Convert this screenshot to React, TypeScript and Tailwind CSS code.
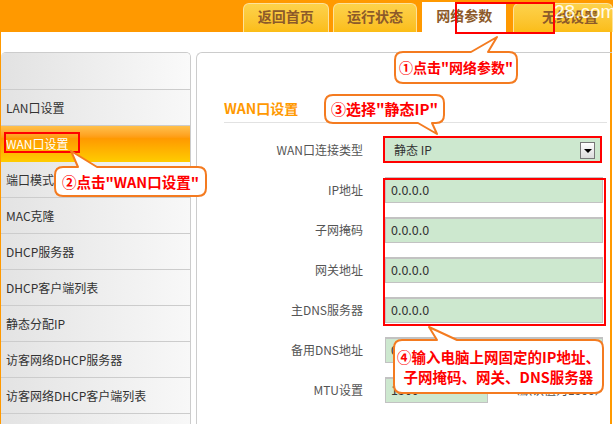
import React from 'react';

const menu = [
  'LAN口设置',
  'WAN口设置',
  '端口模式',
  'MAC克隆',
  'DHCP服务器',
  'DHCP客户端列表',
  '静态分配IP',
  '访客网络DHCP服务器',
  '访客网络DHCP客户端列表',
  '',
];

const fields = [
  { label: 'IP地址', value: '0.0.0.0' },
  { label: '子网掩码', value: '0.0.0.0' },
  { label: '网关地址', value: '0.0.0.0' },
  { label: '主DNS服务器', value: '0.0.0.0' },
  { label: '备用DNS地址', value: '0.0.0.0' },
];

// rounded box with a pointer, drawn as one outline
const bubble = (
  x: number, y: number, w: number, h: number,
  side: 'top' | 'bottom', b1: number, b2: number, ax: number, ay: number
) => {
  const r = 8;
  const R = x + w;
  const B = y + h;
  const top = side === 'top' ? `L${b1},${y} L${ax},${ay} L${b2},${y} ` : '';
  const bottom = side === 'bottom' ? `L${b2},${B} L${ax},${ay} L${b1},${B} ` : '';
  return `M${x + r},${y} ${top}L${R - r},${y} Q${R},${y} ${R},${y + r} L${R},${B - r} Q${R},${B} ${R - r},${B} ${bottom}L${x + r},${B} Q${x},${B} ${x},${B - r} L${x},${y + r} Q${x},${y} ${x + r},${y} Z`;
};

const Tab = ({ text, className }: { text: string; className: string }) => (
  <div className={`h-[29px] rounded-t-[6px] border border-b-0 border-[#fde29a] bg-linear-to-b from-[#fdd24a] to-[#fbbd16] text-[14px] font-bold text-[#8c5a2a] leading-[25px] ${className}`}>
    {text}
  </div>
);

const App = () => {
  return (
    <div className="relative w-[613px] h-[424px] overflow-hidden bg-white font-['Noto_Sans_CJK_SC',sans-serif]">
      {/* top nav */}
      <div className="h-8 bg-[#ff9900] flex items-end pl-[243px]">
        <Tab text="返回首页" className="w-[102px] text-center" />
        <Tab text="运行状态" className="w-[101px] ml-[4px] text-center" />
        <div className="w-[100px] h-[30px] ml-[5px] bg-white text-center text-[14px] font-bold text-[#8c5a2a] leading-[27px]">网络参数</div>
        <Tab text="无线设置" className="w-[100px] ml-[7px] pl-[28px] shrink-0" />
      </div>

      {/* body */}
      <div className="flex w-[612px] h-[392px] border-l border-r-2 border-[#ff9900] pt-5">
        {/* sidebar */}
        <div className="w-[190px] shrink-0 border-t border-r border-[#cccccc] rounded-t-[5px] overflow-hidden">
          <div className="h-[37px] border-b border-[#cccccc] bg-linear-to-r from-[#e2e2e2] to-[#fafafa]" />
          {menu.map((m) =>
            m === 'WAN口设置' ? (
              <div key={m} className="h-9 pl-[5px] flex items-center text-[12px] text-white bg-linear-to-b from-[#ffc04a] from-0% via-[#ff9900] via-35% to-[#ffcc00]">
                {m}
              </div>
            ) : (
              <div key={m || 'blank'} className="h-9 pl-[5px] flex items-center border-b border-[#cccccc] text-[12px] text-[#333] bg-linear-to-r from-[#e3e3e3] to-[#f8f8f8]">
                {m}
              </div>
            )
          )}
        </div>

        {/* main panel */}
        <div className="flex-1 ml-[5px] border-l border-t border-[#cccccc] rounded-tl-[6px] pl-[27px] pr-[5px]">
          <div className="pt-[45px] pb-[4px] border-b border-[#e2e2e2] text-[14px] font-bold text-[#ff9900] leading-[20px]">
            WAN口设置
          </div>
          <div className="pt-[7px]">
            <div className="h-10 flex items-center">
              <div className="w-[139px] text-right text-[12px] text-[#555]">WAN口连接类型</div>
              <div className="relative ml-[22px] w-[215px] h-[26px] bg-[#cde8cf] flex items-center pl-[9px] text-[12px] text-[#333]">
                静态 IP
                <div className="absolute right-[5px] top-[5px] w-[15px] h-[17px] border border-[#777] bg-linear-to-b from-white to-[#dcdcdc] flex items-center justify-center">
                  <div className="w-0 h-0 border-l-[4px] border-r-[4px] border-t-[4px] border-l-transparent border-r-transparent border-t-black" />
                </div>
              </div>
            </div>
            {fields.map((f) => (
              <div key={f.label} className="h-10 flex items-center">
                <div className="w-[139px] text-right text-[12px] text-[#555]">{f.label}</div>
                <div className="ml-[22px] w-[218px] h-[26px] bg-[#cde8cf] border border-[#c2c2c2] border-t-2 flex items-center pl-[5px] text-[12.5px] text-[#333]">
                  {f.value}
                </div>
              </div>
            ))}
            <div className="h-10 flex items-center">
              <div className="w-[139px] text-right text-[12px] text-[#555]">MTU设置</div>
              <div className="ml-[22px] w-[103px] h-[26px] bg-[#cde8cf] border border-[#c2c2c2] border-t-2 flex items-center pl-[5px] text-[12.5px] text-[#333]">
                1500
              </div>
              <div className="ml-[20px] text-[12px] text-[#555] whitespace-nowrap">（默认值为1500）</div>
            </div>
          </div>
        </div>
      </div>

      {/* watermark */}
      <div className="absolute left-[554px] top-0 text-[19px] leading-[24px] text-white/90 font-['Liberation_Sans',sans-serif]">28.com</div>

      {/* red highlight boxes */}
      <div className="absolute left-[455px] top-[2px] w-[100px] h-[32px] border-2 border-[#ff0000]" />
      <div className="absolute left-[4px] top-[132px] w-[76px] h-[21px] border-2 border-[#ff0000]" />
      <div className="absolute left-[383px] top-[136px] w-[219px] h-[27px] border-2 border-[#ff0000]" />
      <div className="absolute left-[383px] top-[178px] w-[223px] h-[148px] border-2 border-[#ff0000]" />

      {/* callouts */}
      <svg className="absolute left-0 top-0 pointer-events-none" width="613" height="424">
        <g fill="#ffffff" stroke="#f47b20" strokeWidth="2" strokeLinejoin="round">
          <path d={bubble(395, 52, 122, 31, 'top', 471, 488, 497, 37)} />
          <path d={bubble(55, 167, 151, 29, 'top', 78, 97, 71, 151)} />
          <path d={bubble(325, 95, 119, 28, 'bottom', 418, 432, 437, 134)} />
          <path d={bubble(394, 340, 209, 53, 'top', 437, 457, 429, 327)} />
        </g>
      </svg>
      <div className="absolute left-[395px] top-[52px] w-[122px] h-[31px] flex items-center justify-center text-[14px] font-bold text-[#ff0000]">①点击"网络参数"</div>
      <div className="absolute left-[55px] top-[167px] w-[151px] h-[29px] flex items-center justify-center text-[14.5px] font-bold text-[#ff0000] whitespace-nowrap">②点击"WAN口设置"</div>
      <div className="absolute left-[325px] top-[95px] w-[119px] h-[28px] flex items-center justify-center text-[15px] font-bold text-[#ff0000]">③选择"静态IP"</div>
      <div className="absolute left-[394px] top-[340px] w-[209px] h-[53px] flex flex-col items-center justify-center text-[14.5px] font-bold text-[#ff0000] leading-[20px] whitespace-nowrap">
        <span>④输入电脑上网固定的IP地址、</span>
        <span>子网掩码、网关、DNS服务器</span>
      </div>
    </div>
  );
};

export default App;
